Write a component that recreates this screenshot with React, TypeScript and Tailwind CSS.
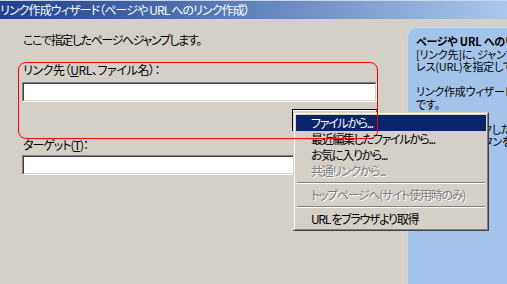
const menuItems = [
  { label: "ファイルから...", active: true },
  { label: "最近編集したファイルから..." },
  { label: "お気に入りから..." },
  { label: "共通リンクから...", disabled: true },
  { sep: true },
  { label: "トップページへ(サイト使用時のみ)", disabled: true },
  { sep: true },
  { label: "URL をブラウザより取得" },
];

const panelLines = [
  "[リンク先]に、ジャンプしたいページのアド",
  "レス(URL)を指定してください。",
  "",
  "リンク作成ウィザードはリンクを作る機能",
  "です。",
  "",
  "ファイルにリンクしたい",
  "ときは、参照ボタンを",
];

function SunkenInput({ className }: { className: string }) {
  return (
    <div className={`border-t border-l border-[#808080] border-r-white border-b-white border ${className}`}>
      <div className="h-full border border-t-[#404040] border-l-[#404040] border-r-[#d4d0c8] border-b-[#d4d0c8] bg-white"></div>
    </div>
  );
}

export default function App() {
  return (
    <div className="w-[507px] h-[284px] bg-[#d4d0c8] relative overflow-hidden text-black font-['Noto_Sans_CJK_JP',sans-serif] [font-feature-settings:'palt'] text-[12px] leading-[16px]">
      <div className="h-[19px] border-t border-[#c8d4ec] bg-gradient-to-r from-[#21408a] to-[#a8c8ee] text-white flex items-center whitespace-nowrap tracking-[-0.9px]">
        リンク作成ウィザード（ページや URL へのリンク作成）
      </div>

      <div className="flex">
        <div className="w-[407px] pl-[22px] pt-[13px]">
          <p className="pl-[1px] tracking-[-1.4px]">ここで指定したページへジャンプします。</p>
          <div className="w-[355px] mt-[14px] flex flex-col">
            <p className="pl-[1px] tracking-[-0.4px]">
              リンク先（<span className="underline">U</span>RL、ファイル名）：
            </p>
            <SunkenInput className="mt-[4px] h-[20px]" />
            <div className="self-end -mr-[1px] mt-[7px] w-[86px] h-[22px] border border-black bg-[#d4d0c8]">
              <div className="h-full border border-t-white border-l-white border-r-[#404040] border-b-[#404040]"></div>
            </div>
            <p className="pl-[1px] mt-[6px] tracking-[-1px]">
              ターゲット(<span className="underline">T</span>)：
            </p>
            <SunkenInput className="mt-[2px] h-[20px] w-[290px]" />
          </div>
        </div>

        <div className="flex-1 mt-[8px] h-[300px] bg-[#a4c3ea] rounded-tl-[10px] border-t border-l border-[#c6d8f0] overflow-hidden pl-[8px] pt-[7px] whitespace-nowrap text-[11px] leading-[12.5px] tracking-[-0.2px]">
          <p className="font-bold">ページや URL へのリンク作成</p>
          {panelLines.map((line, i) => (
            <p key={i} className="h-[12.5px]">
              {line}
            </p>
          ))}
        </div>
      </div>

      <div className="absolute left-[293px] top-[112px] w-[196px] border border-t-[#d4d0c8] border-l-[#d4d0c8] border-r-[#404040] border-b-[#404040]">
        <div className="border border-t-white border-l-white border-r-[#808080] border-b-[#808080] bg-[#d4d0c8] p-[1px] pb-[2px] tracking-[-1.3px]">
          {menuItems.map((item, i) =>
            item.sep ? (
              <div key={i} className="h-[8px] pt-[3px] px-[1px]">
                <div className="border-t border-b border-t-[#808080] border-b-white"></div>
              </div>
            ) : (
              <div
                key={i}
                className={`h-[16px] pl-[15px] flex items-center whitespace-nowrap ${
                  item.active
                    ? "bg-[#0a246a] text-white"
                    : item.disabled
                    ? "text-[#808080] [text-shadow:1px_1px_0_#ffffff]"
                    : ""
                }`}
              >
                {item.label}
              </div>
            )
          )}
        </div>
      </div>

      <div className="absolute left-[18px] top-[62px] w-[360px] h-[77px] border border-[#ff0000] rounded-[8px] pointer-events-none"></div>
    </div>
  );
}
